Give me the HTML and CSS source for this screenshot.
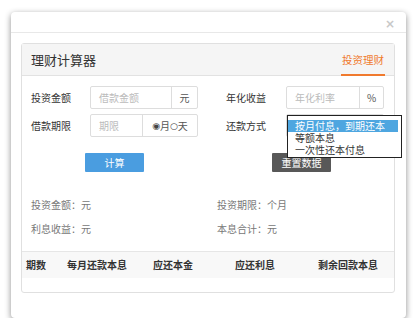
FILE: index.html
```html
<!DOCTYPE html>
<html lang="zh-CN">
<head>
    <meta charset="UTF-8">
    <title>理财计算器</title>
    <link rel="stylesheet" href="styles.css">
</head>
<body>
    <div class="modal">
        <div class="modal-header">
            <span class="close">&times;</span>
        </div>

        <div class="modal-body">
            <div class="panel">
                <div class="panel-heading">
                    <h3>理财计算器</h3>
                    <span class="tab active">投资理财</span>
                </div>

                <div class="calc-form">
                    <div class="field">
                        <label>投资金额</label>
                        <div class="input-group w108">
                            <span class="input placeholder">借款金额</span>
                            <span class="addon a26">元</span>
                        </div>
                    </div>
                    <div class="field">
                        <label>年化收益</label>
                        <div class="input-group w98">
                            <span class="input placeholder">年化利率</span>
                            <span class="addon a24">%</span>
                        </div>
                    </div>
                    <div class="field">
                        <label>借款期限</label>
                        <div class="input-group w108">
                            <span class="input placeholder">期限</span>
                            <span class="addon a55"><span class="radio">◉</span>月 <span class="radio">○</span>天</span>
                        </div>
                    </div>
                    <div class="field">
                        <label>还款方式</label>
                        <div class="select-wrap">
                            <div class="select"></div>
                            <ul class="dropdown">
                                <li class="selected">按月付息，到期还本</li>
                                <li>等额本息</li>
                                <li>一次性还本付息</li>
                            </ul>
                        </div>
                    </div>
                </div>

                <div class="actions">
                    <button class="btn btn-primary">计算</button>
                    <button class="btn btn-dark">重置数据</button>
                </div>

                <div class="results">
                    <p>投资金额：元</p>
                    <p>投资期限：个月</p>
                    <p>利息收益：元</p>
                    <p>本息合计：元</p>
                </div>

                <table class="schedule">
                    <thead>
                        <tr>
                            <th class="c1">期数</th>
                            <th class="c2">每月还款本息</th>
                            <th class="c3">应还本金</th>
                            <th class="c4">应还利息</th>
                            <th>剩余回款本息</th>
                        </tr>
                    </thead>
                    <tbody>
                        <tr><td colspan="5"></td></tr>
                    </tbody>
                </table>
            </div>
        </div>
    </div>
</body>
</html>
```

FILE: styles.css
```css
/* Base */
* {
    margin: 0;
    padding: 0;
    box-sizing: border-box;
}

body {
    font-family: "Noto Sans CJK SC", "Noto Sans", sans-serif;
    font-size: 10px;
    color: #333;
    background: #fff;
}

/* Modal */
.modal {
    width: 395px;
    margin: 12px 0 0 11px;
    background: #fff;
    border-radius: 4px;
    box-shadow: 0 2px 6px rgba(0,0,0,0.45);
}

.modal-header {
    height: 21px;
    border-bottom: 1px solid #e8e8e8;
    display: flex;
    justify-content: flex-end;
    align-items: flex-end;
    padding: 0 11px 0 0;
}

.close {
    font-family: "DejaVu Sans", sans-serif;
    font-size: 12px;
    line-height: 14px;
    color: #c8c8c8;
    font-weight: bold;
    margin-bottom: 1px;
}

.modal-body {
    padding: 10px 11px 25px 10px;
}

/* Panel */
.panel {
    border: 1px solid #e0e0e0;
    border-radius: 3px;
}

.panel-heading {
    height: 32px;
    background: #f5f5f5;
    border-bottom: 1px solid #e2e2e2;
    display: flex;
    justify-content: space-between;
    align-items: stretch;
    padding: 0 9px 0 9px;
}

.panel-heading h3 {
    font-size: 13px;
    font-weight: normal;
    color: #333;
    line-height: 32px;
}

.tab {
    font-size: 10.5px;
    line-height: 32px;
    color: #f07a2e;
    border-bottom: 2px solid #f07a2e;
    padding: 0 1px;
    margin-bottom: -1px;
}

/* Form */
.calc-form {
    display: grid;
    grid-template-columns: 195px 1fr;
    row-gap: 5px;
    padding: 10px 0 0 9px;
}

.field {
    display: flex;
    align-items: center;
    height: 23px;
}

.field label {
    width: 59px;
    font-size: 10px;
    color: #333;
}

.field:nth-child(2n) label {
    width: 60px;
}

.input-group {
    display: flex;
    height: 100%;
    border: 1px solid #ddd;
    border-radius: 2px;
    background: #fff;
}

.w108 { width: 108px; }
.w98 { width: 98px; }

.input {
    flex: 1;
    display: flex;
    align-items: center;
    padding-left: 8px;
}

.placeholder {
    color: #bbb;
    font-size: 10px;
}

.addon {
    border-left: 1px solid #ddd;
    display: flex;
    align-items: center;
    justify-content: center;
    font-size: 10px;
    color: #555;
}

.a26 { width: 26px; }
.a24 { width: 24px; }
.a55 { width: 55px; }

.radio {
    font-family: "DejaVu Sans", sans-serif;
    font-size: 9px;
    color: #444;
}

/* Select with open dropdown */
.select-wrap {
    position: relative;
    width: 98px;
    height: 100%;
}

.select {
    height: 100%;
    border: 1px solid #ddd;
    border-radius: 2px;
}

.dropdown {
    position: absolute;
    top: 1px;
    left: 1px;
    width: 115px;
    list-style: none;
    background: #fff;
    border: 1px solid #222;
    padding: 4px 3px 1px 0;
    z-index: 2;
}

.dropdown li {
    font-size: 10px;
    line-height: 12px;
    height: 12px;
    padding-left: 7px;
    color: #333;
}

.dropdown li.selected {
    background: #4ea6e0;
    color: #fff;
}

/* Buttons */
.actions {
    display: flex;
    padding: 16px 0 0 63px;
}

.btn {
    width: 59px;
    height: 19px;
    border: none;
    border-radius: 1px;
    color: #fff;
    font-family: inherit;
    font-size: 10px;
}

.btn-primary {
    background: #4a9de0;
}

.btn-dark {
    background: #585858;
    margin-left: 128px;
}

/* Results */
.results {
    display: grid;
    grid-template-columns: 186px 1fr;
    padding: 21px 0 0 9px;
}

.results p {
    line-height: 24px;
    color: #777;
    font-size: 10px;
}

/* Table */
.schedule {
    width: 100%;
    margin-top: 10px;
    border-collapse: collapse;
}

.schedule th {
    height: 26px;
    background: #f8f8f8;
    border-top: 1px solid #e6e6e6;
    text-align: left;
    font-size: 10px;
    font-weight: bold;
    color: #333;
}

.schedule th.c1 { width: 45px; padding-left: 4px; }
.schedule th.c2 { width: 86px; }
.schedule th.c3 { width: 82px; }
.schedule th.c4 { width: 83px; }

.schedule td {
    height: 14px;
}
```
